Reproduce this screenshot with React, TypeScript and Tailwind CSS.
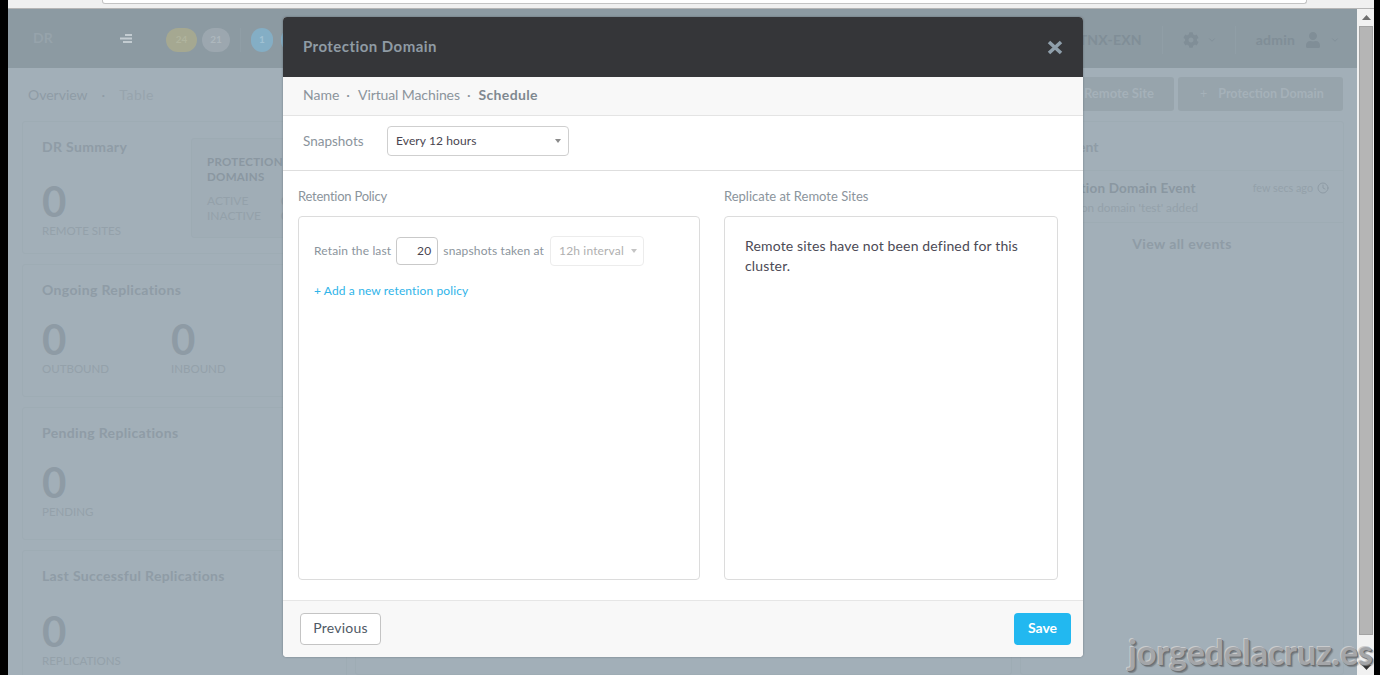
import { ChevronDown, Clock } from 'lucide-react';
import { FaCog, FaUser } from 'react-icons/fa';

function Stat({ value, label, className = '' }: { value: string; label: string; className?: string }) {
  return (
    <div className={`shrink-0 pt-[3px] ${className}`}>
      <div className="text-[42px] leading-[40px] font-bold text-[#8e9ba5]">{value}</div>
      <div className="mt-[3px] text-[11.5px] leading-[14px] text-[#94a1aa]">{label}</div>
    </div>
  );
}

function Card({ title, children }: { title: string; children: React.ReactNode }) {
  return (
    <div className="h-[133px] shrink-0 overflow-hidden rounded-[3px] border border-[#9eacb4] px-[19px] pt-[16px]">
      <div className="text-[14px] leading-[18px] font-bold tracking-[0.35px] text-[#8f9ca6]">{title}</div>
      <div className="mt-[17px] flex">{children}</div>
    </div>
  );
}

function Background() {
  return (
    <div className="flex h-full min-w-0 flex-1 flex-col overflow-hidden bg-[#a2afb8]">
      {/* top nav */}
      <div className="flex h-[59px] shrink-0 items-center bg-[#8c9aa2] pl-[25px] pr-[17px] pt-[2px]">
        <span className="mt-[-5px] w-[87px] text-[14px] font-bold text-[#96a3ab]">DR</span>
        <svg width="12" height="9" viewBox="0 0 12 9" className="mt-[-2px] fill-[#c3ccd1]">
          <rect x="5" y="0" width="7" height="2" />
          <rect x="0" y="3.5" width="12" height="2" />
          <rect x="3" y="7" width="9" height="2" />
        </svg>
        <div className="ml-[34px] flex items-center">
          <span className="flex h-[24px] w-[31px] items-center justify-center rounded-full bg-[#a5a891] text-[10px] font-bold text-[#b0b49e]">24</span>
          <span className="ml-[5px] flex h-[24px] w-[28px] items-center justify-center rounded-full bg-[#9ca7af] text-[10px] font-bold text-[#adb7bd]">21</span>
          <span className="ml-[10px] h-[24px] w-px bg-[#909ea6]" />
          <span className="ml-[10px] flex h-[24px] w-[22px] items-center justify-center rounded-full bg-[#84aec5] text-[10px] font-bold text-[#a0c1d3]">1</span>
          <span className="ml-[8px] h-[24px] w-[22px] rounded-full bg-[#84aec5]" />
        </div>
        <div className="ml-auto flex items-center text-[#808e97]">
          <span className="text-[14px] font-bold tracking-[0.2px]">NTNX-EXN</span>
          <span className="ml-[20px] h-[28px] w-px bg-[#909ea6]" />
          <FaCog className="ml-[20px] text-[16px]" />
          <ChevronDown className="ml-[8px]" size={10} strokeWidth={2} />
          <span className="ml-[18px] h-[28px] w-px bg-[#909ea6]" />
          <span className="ml-[20px] text-[14px] font-bold tracking-[0.2px]">admin</span>
          <FaUser className="ml-[10px] text-[16px]" />
          <ChevronDown className="ml-[9px]" size={10} strokeWidth={2} />
        </div>
      </div>

      {/* sub nav */}
      <div className="flex h-[53px] shrink-0 items-start pl-[20px] pr-[14px]">
        <div className="mt-[18px] flex text-[14px] leading-[18px] text-[#8f9ca6]">
          <span>Overview</span>
          <span className="mx-[14px]">·</span>
          <span className="tracking-[0.5px] text-[#97a4ad]">Table</span>
        </div>
        <div className="ml-auto mt-[9px] flex gap-[4px] text-[12.5px] font-bold text-[#a5b1b9]">
          <button className="flex h-[34px] w-[200px] items-center justify-end rounded-[3px] bg-[#97a4ac] pr-[20px] text-[13px]">Remote Site</button>
          <button className="flex h-[34px] w-[165px] items-center rounded-[3px] bg-[#97a4ac] pl-[22px]">
            <span className="mr-[11px] font-normal">+</span>Protection Domain
          </button>
        </div>
      </div>

      {/* columns */}
      <div className="flex min-h-0 flex-1 gap-[8px] pl-[14px] pr-[13px]">
        <div className="flex w-[325px] shrink-0 flex-col gap-[10px]">
          <Card title="DR Summary">
            <Stat value="0" label="REMOTE SITES" className="mt-[5px] w-[149px]" />
            <div className="mt-[-35px] h-[100px] w-[200px] shrink-0 rounded-[3px] border border-[#9dabb3] bg-[#a0adb6] pl-[15px] pt-[15px]">
              <div className="text-[11.5px] leading-[15px] font-bold tracking-[0.3px] text-[#8a97a1]">
                PROTECTION
                <br />
                DOMAINS
              </div>
              <div className="mt-[9px] text-[12px] leading-[15px] text-[#94a1aa]">
                <div className="flex">
                  <span className="w-[74px]">ACTIVE</span>
                  <span className="font-bold">0</span>
                </div>
                <div className="flex">
                  <span className="w-[74px]">INACTIVE</span>
                  <span className="font-bold">0</span>
                </div>
              </div>
            </div>
          </Card>
          <Card title="Ongoing Replications">
            <Stat value="0" label="OUTBOUND" className="w-[129px]" />
            <Stat value="0" label="INBOUND" />
          </Card>
          <Card title="Pending Replications">
            <Stat value="0" label="PENDING" />
          </Card>
          <Card title="Last Successful Replications">
            <Stat value="0" label="REPLICATIONS" className="mt-[6px]" />
          </Card>
        </div>
        <div className="flex-1 rounded-[3px] border border-[#9eacb4]" />
        <div className="w-[324px] shrink-0 rounded-[3px] border border-[#9eacb4]">
          <div className="h-[49px] border-b border-[#9eacb4] pl-[19px] pt-[16px] text-[14px] leading-[18px] font-bold text-[#8f9ca6]">DR Event</div>
          <div className="h-[52px] border-b border-[#9eacb4] pl-[19px] pr-[14px] pt-[8px]">
            <div className="flex items-center">
              <span className="text-[13.5px] leading-[18px] font-bold tracking-[0.2px] text-[#8a97a1]">Protection Domain Event</span>
              <span className="ml-auto text-[10.8px] text-[#94a1aa]">few secs ago</span>
              <Clock className="ml-[4px] text-[#8e9ba5]" size={12} />
            </div>
            <div className="mt-[4px] text-[11.8px] leading-[14px] text-[#94a1aa]">Protection domain 'test' added</div>
          </div>
          <div className="pt-[12px] text-center text-[14px] leading-[18px] font-bold tracking-[0.4px] text-[#8f9ca6]">View all events</div>
        </div>
      </div>
    </div>
  );
}

function Caret({ className }: { className: string }) {
  return (
    <svg width="6" height="4" viewBox="0 0 6 4" className={className}>
      <path d="M0 0h6L3 4z" />
    </svg>
  );
}

function Modal() {
  return (
    <div className="absolute left-[283px] top-[17px] flex h-[640px] w-[800px] flex-col overflow-hidden rounded-[4px] bg-white shadow-[0_0_2px_rgba(60,70,80,0.6)]">
      <div className="flex h-[60px] shrink-0 items-center justify-between bg-[#353639] pb-[2px] pl-[20px] pr-[20px]">
        <span className="text-[15px] font-bold tracking-[0.45px] text-[#8f9ba4]">Protection Domain</span>
        <svg width="16" height="15" viewBox="0 0 16 15" className="mt-[2px]">
          <path d="M2 2l12 11M14 2L2 13" stroke="#8f9fab" strokeWidth="3.6" />
        </svg>
      </div>

      <div className="flex h-[39px] shrink-0 items-center gap-[7px] border-b border-[#e4e4e4] bg-[#f8f8f8] pb-[3px] pl-[20px] text-[14px] text-[#8b949c]">
        <span>Name</span>
        <span>·</span>
        <span className="ml-[1px] tracking-[-0.1px]">Virtual Machines</span>
        <span>·</span>
        <span className="ml-[1px] font-bold tracking-[0.35px] text-[#7f8890]">Schedule</span>
      </div>

      <div className="flex h-[55px] shrink-0 items-center border-b border-[#dedede] pb-[4px] pl-[20px]">
        <span className="w-[84px] text-[13.5px] text-[#8b949c]">Snapshots</span>
        <div className="flex h-[30px] w-[182px] items-center justify-between rounded-[4px] border border-[#cfcfcf] pl-[8px] pr-[7px] text-[12px] tracking-[0.1px] text-[#4a4550]">
          Every 12 hours
          <Caret className="fill-[#8b8b8b]" />
        </div>
      </div>

      <div className="flex min-h-0 flex-1 gap-[24px] pl-[15px] pr-[25px] pt-[17px]">
        <div className="w-[402px] shrink-0">
          <div className="text-[13px] leading-[16px] tracking-[-0.25px] text-[#8b949c]">Retention Policy</div>
          <div className="mt-[12px] h-[364px] rounded-[4px] border border-[#dcdcdc] pl-[15px] pt-[19px]">
            <div className="flex items-center text-[12px] tracking-[0.15px] text-[#8b949c]">
              <span>Retain the last</span>
              <div className="ml-[5px] flex h-[28px] w-[42px] items-center justify-end rounded-[4px] border border-[#c9c9c9] pr-[6px] text-[#4a4550]">20</div>
              <span className="ml-[5px]">snapshots taken at</span>
              <div className="ml-[6px] flex h-[30px] w-[94px] items-center justify-between rounded-[4px] border border-[#ececec] pl-[8px] pr-[6px] text-[#b0b0b0]">
                12h interval
                <Caret className="fill-[#c4c4c4]" />
              </div>
            </div>
            <div className="mt-[17px] text-[12px] leading-[16px] tracking-[0.12px] text-[#2fb4e9]">+ Add a new retention policy</div>
          </div>
        </div>
        <div className="min-w-0 flex-1">
          <div className="text-[13px] leading-[16px] text-[#8b949c]">Replicate at Remote Sites</div>
          <div className="mt-[12px] h-[364px] rounded-[4px] border border-[#dcdcdc] pl-[20px] pr-[20px] pt-[19px] text-[14px] leading-[20px] tracking-[0.15px] text-[#4c4a55]">
            Remote sites have not been defined for this cluster.
          </div>
        </div>
      </div>

      <div className="flex h-[57px] shrink-0 items-center justify-between border-t border-[#e6e6e6] bg-[#f8f8f8] pl-[17px] pr-[12px]">
        <button className="h-[32px] w-[81px] rounded-[4px] border border-[#c4c4c4] bg-white pb-[3px] text-[14px] tracking-[0.2px] text-[#4f5a66]">Previous</button>
        <button className="h-[32px] w-[57px] rounded-[4px] bg-[#22b8f0] pb-[3px] text-[14px] font-bold text-white">Save</button>
      </div>
    </div>
  );
}

export default function App() {
  return (
    <div className="relative flex h-[675px] w-[1380px] overflow-hidden bg-black font-['Lato',sans-serif]">
      <div className="w-[8px] shrink-0 bg-black" />
      <div className="flex h-full w-[1366px] shrink-0 flex-col">
        {/* browser chrome */}
        <div className="h-[9px] shrink-0 border-b border-[#b5b5b5] bg-[#f0f0f0]">
          <div className="ml-[94px] h-[4px] w-[1205px] rounded-b-[3px] border-x border-b border-[#c4c4c4] bg-white" />
        </div>
        <div className="flex min-h-0 flex-1">
          <Background />
          {/* scrollbar */}
          <div className="flex w-[17px] shrink-0 flex-col items-center bg-[#f1f1f1] pl-[1px]">
            <svg width="9" height="5" viewBox="0 0 9 5" className="mt-[6px] fill-[#6f6f6f]">
              <path d="M4.5 0L9 5H0z" />
            </svg>
            <div className="mt-[6px] h-[609px] w-[14px] border border-[#a3a3a3] bg-[#b5b5b5]" />
            <svg width="9" height="5" viewBox="0 0 9 5" className="mt-[30px] fill-[#333]">
              <path d="M0 0h9L4.5 5z" />
            </svg>
          </div>
        </div>
      </div>
      <div className="w-[6px] shrink-0 bg-black" />

      <Modal />

      <div className="absolute bottom-[4px] right-[7px] text-[34px] leading-[38px] font-bold text-[#a4a6a9] [text-shadow:1px_1px_0_#6c6f72,2px_2px_1px_rgba(60,60,60,0.4),-1px_-1px_0_#c9cbcd]">
        jorgedelacruz.es
      </div>
    </div>
  );
}
